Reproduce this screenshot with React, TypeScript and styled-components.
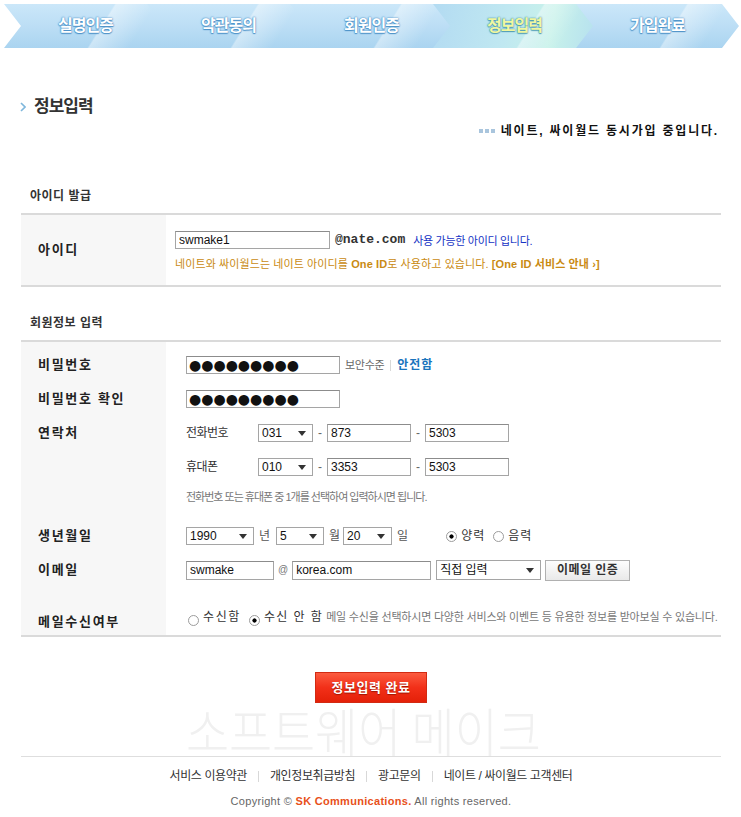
import React from 'react'
import styled, { createGlobalStyle } from 'styled-components'

const KR = `"Liberation Sans", "Noto Sans CJK KR", sans-serif`

const GlobalStyle = createGlobalStyle`
  body {
    margin: 0;
    background: #fff;
    font-family: ${KR};
    color: #333;
  }
`

const Page = styled.div`
  width: 741px;
  padding-bottom: 12px;
`

const Steps = styled.div`
  display: flex;
  height: 44px;
  margin: 4px 0 0 4px;
`

const Step = styled.div<{ $active?: boolean }>`
  flex: 0 0 163px;
  height: 44px;
  margin-left: -20px;
  padding: 0 17px;
  box-sizing: border-box;
  display: flex;
  align-items: center;
  justify-content: center;
  clip-path: polygon(0 0, 146px 0, 163px 50%, 146px 100%, 0 100%, 17px 50%);
  background: linear-gradient(122deg, rgba(255, 255, 255, 0) 58%, rgba(255, 255, 255, 0.4) 59%, rgba(255, 255, 255, 0) 80%),
    ${p =>
      p.$active
        ? 'linear-gradient(100deg, #b3dbf2 0%, #c0e8f1 45%, #c8f2ea 72%, #b5e0ef 100%)'
        : 'linear-gradient(180deg, #cbe7f9 0%, #bcdef5 50%, #aad4f0 100%)'};
  font: bold 16px/20px ${KR};
  letter-spacing: -1px;
  color: ${p => (p.$active ? '#f0f7a0' : '#fff')};
  text-shadow: ${p =>
    p.$active
      ? '0 0 1px #4f9cb4, 0 0 2px #4f9cb4, 0 1px 1px #4f9cb4'
      : '0 0 1px #3f88c2, 0 0 2px #4d92c8, 0 1px 1px #4d92c8'};

  &:first-child {
    margin-left: 0;
  }
`

const Title = styled.h2`
  display: flex;
  align-items: center;
  gap: 8px;
  margin: 49px 0 0 20px;
  font: bold 17px/20px ${KR};
  letter-spacing: -1px;
  color: #333;
`

const Notice = styled.p`
  display: flex;
  justify-content: flex-end;
  align-items: center;
  gap: 6px;
  margin: 6px 22px 0 0;
  font: bold 12px/16px ${KR};
  letter-spacing: 1.8px;
  color: #111;
`

const Dots = styled.span`
  display: flex;
  gap: 2px;

  i {
    width: 4px;
    height: 4px;
    background: #a9c5dd;
  }
`

const Content = styled.div`
  width: 700px;
  margin-left: 21px;
`

const SectionHead = styled.h3<{ $top: number }>`
  margin: ${p => p.$top}px 0 9px;
  padding-left: 9px;
  font: bold 12px/16px ${KR};
  letter-spacing: 0.5px;
  color: #333;
`

const Board = styled.div`
  border-top: 2px solid #dadada;
  border-bottom: 2px solid #dadada;
`

const Row = styled.div<{ $h: number }>`
  display: grid;
  grid-template-columns: 145px 1fr;
  height: ${p => p.$h}px;
`

const Label = styled.div<{ $pt: number; $pb: number; $end?: boolean }>`
  display: flex;
  align-items: ${p => (p.$end ? 'flex-end' : 'center')};
  padding: ${p => p.$pt}px 0 ${p => p.$pb}px 17px;
  background: #f7f7f7;
  font: bold 13px/18px ${KR};
  letter-spacing: 1.7px;
  color: #222;
`

const Cell = styled.div<{ $pt: number; $pb: number; $end?: boolean }>`
  display: flex;
  align-items: ${p => (p.$end ? 'flex-end' : 'center')};
  padding: ${p => p.$pt}px 0 ${p => p.$pb}px 20px;
  font: 12px/18px ${KR};
  color: #333;
  white-space: nowrap;
`

const Line = styled.div`
  display: flex;
  align-items: center;
  height: 18px;
`

const IdCell = styled.div`
  display: flex;
  flex-direction: column;
  gap: 7px;
  padding: 16px 0 0 9px;
`

const Field = styled.input<{ $w: number; $h?: number }>`
  width: ${p => p.$w}px;
  height: ${p => p.$h ?? 18}px;
  box-sizing: border-box;
  border: 1px solid #a5a5a5;
  border-top-color: #8c8c8c;
  padding: 0 3px;
  margin: 0;
  font: 12px ${KR};
  color: #111;
  outline: none;
`

const Secret = styled(Field)`
  font: 14px "DejaVu Sans", sans-serif;
  letter-spacing: 0;
  padding-left: 2px;
`

const Combo = styled.div<{ $w: number; $h?: number; $ml?: number }>`
  width: ${p => p.$w}px;
  height: ${p => p.$h ?? 18}px;
  margin-left: ${p => p.$ml ?? 0}px;
  box-sizing: border-box;
  border: 1px solid #a5a5a5;
  display: flex;
  align-items: center;
  justify-content: space-between;
  padding: 0 6px 0 3px;
  font: 12px/16px ${KR};
  color: #111;

  &::after {
    content: '';
    border-left: 4px solid transparent;
    border-right: 4px solid transparent;
    border-top: 5px solid #333;
  }
`

const Txt = styled.span<{ $ml?: number; $mr?: number; $w?: number; $c?: string; $size?: number; $ls?: number; $b?: boolean }>`
  ${p => (p.$w ? `width: ${p.$w}px;` : '')}
  margin: 0 ${p => p.$mr ?? 0}px 0 ${p => p.$ml ?? 0}px;
  color: ${p => p.$c ?? '#333'};
  font-size: ${p => p.$size ?? 12}px;
  font-weight: ${p => (p.$b ? 'bold' : 'normal')};
  letter-spacing: ${p => p.$ls ?? 0}px;
`

const Domain = styled.span`
  margin-left: 5px;
  font: bold 13px/18px "Liberation Mono", monospace;
  color: #333;
`

const Guide = styled.div`
  font: 11px/16px ${KR};
  letter-spacing: 0.1px;
  color: #c98a12;

  b {
    font-weight: bold;
  }
`

const Dash = styled.span`
  width: 14px;
  text-align: center;
  color: #666;
`

const Radio = styled.span<{ $on?: boolean; $ml?: number }>`
  flex: none;
  width: 11px;
  height: 11px;
  margin: 0 4px 0 ${p => p.$ml ?? 0}px;
  box-sizing: border-box;
  border: 1px solid #9c9c9c;
  border-radius: 50%;
  background: ${p => (p.$on ? 'radial-gradient(circle, #000 0 1.8px, #fff 2.4px)' : '#fff')};
`

const AuthButton = styled.button`
  height: 21px;
  width: 85px;
  margin-left: 4px;
  padding: 0;
  border: 1px solid #b0b0b0;
  background: linear-gradient(#fdfdfd, #e9e9e9);
  font: bold 12px/19px ${KR};
  letter-spacing: 0.5px;
  color: #333;
`

const Submit = styled.button`
  display: block;
  width: 112px;
  height: 31px;
  margin: 35px auto 0;
  padding: 0;
  border: 1px solid #d22a12;
  background: linear-gradient(#fb5b3f, #f23019 50%, #e42008);
  font: bold 13px/29px ${KR};
  letter-spacing: 0.5px;
  color: #fff;
  text-shadow: 0 1px 1px #9e1400;
`

const Watermark = styled.div`
  height: 53px;
  padding-left: 165px;
  white-space: nowrap;
  font: 300 52px/53px "Noto Sans CJK KR", sans-serif;
  color: #f0f0f0;

  span {
    display: inline-block;
    transform: scaleX(0.9);
    transform-origin: left center;
  }
`

const Footer = styled.footer`
  border-top: 1px solid #dedede;
`

const FooterLinks = styled.nav`
  display: flex;
  justify-content: center;
  align-items: center;
  margin-top: 11px;
  font: 12px/16px ${KR};
  letter-spacing: -0.4px;
  color: #333;
`

const Sep = styled.span<{ $m?: number }>`
  width: 1px;
  height: 11px;
  margin: 0 ${p => p.$m ?? 11}px;
  background: #d8d8d8;
`

const Copyright = styled.p`
  margin: 10px 0 0;
  text-align: center;
  font: 11px/14px "Liberation Sans", sans-serif;
  letter-spacing: 0.3px;
  color: #666;

  strong {
    color: #e8511a;
  }
`

type FormRowProps = {
  label?: string
  h: number
  pt?: number
  pb?: number
  lpb?: number
  end?: boolean
  children?: React.ReactNode
}

const FormRow = ({ label, h, pt = 0, pb = 0, lpb, end, children }: FormRowProps) => (
  <Row $h={h}>
    <Label $pt={pt} $pb={lpb ?? pb} $end={end}>
      {label}
    </Label>
    <Cell $pt={pt} $pb={pb} $end={end}>
      {children}
    </Cell>
  </Row>
)

const steps = ['실명인증', '약관동의', '회원인증', '정보입력', '가입완료']
const pw = '●●●●●●●●●'

const App = () => {
  return (
    <Page>
      <GlobalStyle />
      <Steps>
        {steps.map((s, i) => (
          <Step key={s} $active={i === 3}>
            {s}
          </Step>
        ))}
      </Steps>

      <Title>
        <svg width="6" height="10" viewBox="0 0 6 10">
          <path d="M1 1l4 4-4 4" fill="none" stroke="#7fb7dc" strokeWidth="1.6" />
        </svg>
        정보입력
      </Title>
      <Notice>
        <Dots>
          <i />
          <i />
          <i />
        </Dots>
        네이트, 싸이월드 동시가입 중입니다.
      </Notice>

      <Content>
        <SectionHead $top={49}>아이디 발급</SectionHead>
        <Board>
          <Row $h={70}>
            <Label $pt={0} $pb={0}>아이디</Label>
            <IdCell>
              <Line>
                <Field $w={155} defaultValue="swmake1" readOnly />
                <Domain>@nate.com</Domain>
                <Txt $ml={8} $c="#1432c4" $size={11} $ls={-0.3}>
                  사용 가능한 아이디 입니다.
                </Txt>
              </Line>
              <Guide>
                네이트와 싸이월드는 네이트 아이디를 <b>One ID</b>로 사용하고 있습니다. <b>[One ID 서비스 안내 ›]</b>
              </Guide>
            </IdCell>
          </Row>
        </Board>

        <SectionHead $top={28}>회원정보 입력</SectionHead>
        <Board>
          <FormRow label="비밀번호" h={40} pt={6}>
            <Secret $w={154} defaultValue={pw} readOnly />
            <Txt $ml={5} $c="#666" $size={11} $ls={-0.3}>
              보안수준
            </Txt>
            <Sep $m={6} />
            <Txt $c="#1a74bd" $b $ls={1}>
              안전함
            </Txt>
          </FormRow>
          <FormRow label="비밀번호 확인" h={34}>
            <Secret $w={154} defaultValue={pw} readOnly />
          </FormRow>
          <FormRow label="연락처" h={34}>
            <Txt $ls={-0.5} $w={72}>전화번호</Txt>
            <Combo $w={55}>031</Combo>
            <Dash>-</Dash>
            <Field $w={84} defaultValue="873" readOnly />
            <Dash>-</Dash>
            <Field $w={84} defaultValue="5303" readOnly />
          </FormRow>
          <FormRow h={34}>
            <Txt $ls={-0.5} $w={72}>휴대폰</Txt>
            <Combo $w={55}>010</Combo>
            <Dash>-</Dash>
            <Field $w={84} defaultValue="3353" readOnly />
            <Dash>-</Dash>
            <Field $w={84} defaultValue="5303" readOnly />
          </FormRow>
          <FormRow h={26}>
            <Txt $c="#777" $size={11} $ls={-1}>
              전화번호 또는 휴대폰 중 1개를 선택하여 입력하시면 됩니다.
            </Txt>
          </FormRow>
          <FormRow label="생년월일" h={43} pt={9}>
            <Combo $w={68}>1990</Combo>
            <Txt $ml={5} $mr={6} $c="#555">년</Txt>
            <Combo $w={48}>5</Combo>
            <Txt $ml={5} $mr={3} $c="#555">월</Txt>
            <Combo $w={49}>20</Combo>
            <Txt $ml={5} $c="#555">일</Txt>
            <Radio $on $ml={38} />
            <Txt $ls={1}>양력</Txt>
            <Radio $ml={8} />
            <Txt $ls={1}>음력</Txt>
          </FormRow>
          <FormRow label="이메일" h={34}>
            <Field $w={88} $h={19} defaultValue="swmake" readOnly />
            <Txt $ml={4} $mr={4} $c="#777" $size={10}>@</Txt>
            <Field $w={139} $h={19} defaultValue="korea.com" readOnly />
            <Combo $w={105} $h={20} $ml={5}>
              직접 입력
            </Combo>
            <AuthButton>이메일 인증</AuthButton>
          </FormRow>
          <FormRow label="메일수신여부" h={48} end pb={9} lpb={4}>
            <Radio $ml={2} />
            <Txt $ls={1.6} $mr={8}>수신함</Txt>
            <Radio $on />
            <Txt $ls={1.4} $mr={3}>수신 안 함</Txt>
            <Txt $c="#777" $size={11} $ls={-0.2}>
              메일 수신을 선택하시면 다양한 서비스와 이벤트 등 유용한 정보를 받아보실 수 있습니다.
            </Txt>
          </FormRow>
        </Board>

        <Submit>정보입력 완료</Submit>
        <Watermark>
          <span>소프트웨어 메이크</span>
        </Watermark>

        <Footer>
          <FooterLinks>
            서비스 이용약관
            <Sep />
            개인정보취급방침
            <Sep />
            광고문의
            <Sep />
            네이트 / 싸이월드 고객센터
          </FooterLinks>
          <Copyright>
            Copyright © <strong>SK Communications.</strong> All rights reserved.
          </Copyright>
        </Footer>
      </Content>
    </Page>
  )
}

export default App
